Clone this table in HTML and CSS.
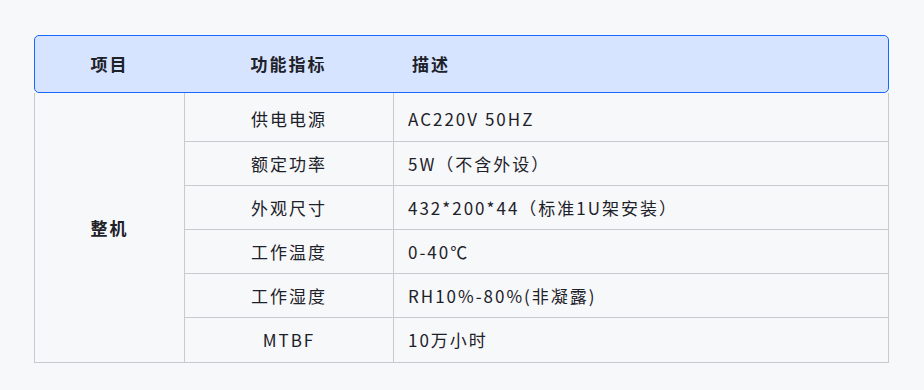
FILE: index.html
```html
<!DOCTYPE html>
<html lang="zh-CN">
<head>
<meta charset="utf-8">
<title>整机参数</title>
<link rel="stylesheet" href="styles.css">
</head>
<body>
<div class="spec">
  <div class="spec-head">
    <div class="h-cell h-item">项目</div>
    <div class="h-cell h-func">功能指标</div>
    <div class="h-cell h-desc">描述</div>
  </div>
  <div class="spec-body">
    <div class="cell group">整机</div>
    <div class="cell name first">供电电源</div>
    <div class="cell desc first">AC220V 50HZ</div>
    <div class="cell name">额定功率</div>
    <div class="cell desc">5W（不含外设）</div>
    <div class="cell name">外观尺寸</div>
    <div class="cell desc">432*200*44（标准1U架安装）</div>
    <div class="cell name">工作温度</div>
    <div class="cell desc">0-40℃</div>
    <div class="cell name">工作湿度</div>
    <div class="cell desc">RH10%-80%(非凝露)</div>
    <div class="cell name last">MTBF</div>
    <div class="cell desc last">10万小时</div>
  </div>
</div>
</body>
</html>
```

FILE: styles.css
```css
html, body {
  margin: 0;
  padding: 0;
  background: #f7f8fa;
}
body {
  font-family: "Noto Sans CJK SC", "Noto Sans", sans-serif;
  color: #1d2129;
  font-size: 17px;
}
.spec {
  width: 855px;
  padding: 35px 0 0 34px;
}
.spec-head {
  display: grid;
  grid-template-columns: 149px 209px 1fr;
  height: 56px;
  background: #d6e4ff;
  border: 1px solid #1a66ff;
  border-radius: 5px;
  align-items: center;
  font-weight: 700;
  letter-spacing: 2px;
}
.h-cell { line-height: 24px; }
.h-item, .h-func { text-align: center; }
.h-desc { padding-left: 19px; }
.spec-body {
  display: grid;
  grid-template-columns: 150px 209px 1fr;
  grid-template-rows: 49px 44px 44px 44px 44px 45px;
  border-left: 1px solid #c9cacd;
  border-right: 1px solid #c9cacd;
}
.cell {
  display: flex;
  align-items: center;
  border-bottom: 1px solid #c9cacd;
  letter-spacing: 2px;
  line-height: 24px;
}
.group {
  grid-row: 1 / span 6;
  justify-content: center;
  font-weight: 700;
  border-right: 1px solid #c9cacd;
}
.name {
  justify-content: center;
  border-right: 1px solid #c9cacd;
}
.desc {
  padding-left: 14px;
}
.first { padding-top: 4px; }
```
